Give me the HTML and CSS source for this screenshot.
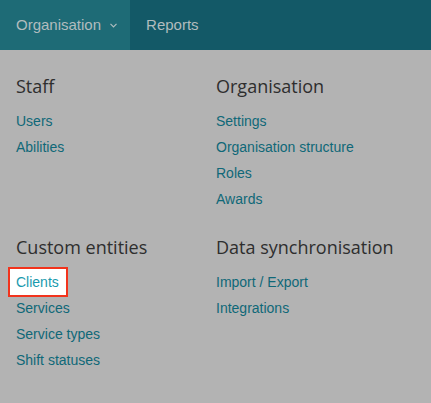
FILE: index.html
```html
<!DOCTYPE html>
<html>
<head>
<meta charset="utf-8">
<link rel="stylesheet" href="styles.css">
</head>
<body>
<nav class="nav">
  <div class="tab active">Organisation
    <svg class="chev" width="7" height="5" viewBox="0 0 7 5"><path d="M0.5 0.8 L3.5 3.8 L6.5 0.8" fill="none" stroke="#aebcbe" stroke-width="1.2"/></svg>
  </div>
  <div class="tab">Reports</div>
</nav>
<main class="menu">
  <section class="group">
    <h2 class="heading">Staff</h2>
    <a class="link">Users</a>
    <a class="link">Abilities</a>
  </section>
  <section class="group">
    <h2 class="heading">Organisation</h2>
    <a class="link">Settings</a>
    <a class="link">Organisation structure</a>
    <a class="link">Roles</a>
    <a class="link">Awards</a>
  </section>
  <section class="group">
    <h2 class="heading">Custom entities</h2>
    <a class="link highlight">Clients</a>
    <a class="link">Services</a>
    <a class="link">Service types</a>
    <a class="link">Shift statuses</a>
  </section>
  <section class="group">
    <h2 class="heading">Data synchronisation</h2>
    <a class="link">Import / Export</a>
    <a class="link">Integrations</a>
  </section>
</main>
</body>
</html>
```
FILE: styles.css
```css
html, body {
  margin: 0;
  padding: 0;
  background: #b3b3b3;
  width: 431px;
  height: 403px;
  overflow: hidden;
}
.nav {
  display: flex;
  height: 50px;
  background: #135967;
  font-family: "Liberation Sans", Arial, sans-serif;
  font-size: 15px;
  line-height: 50px;
  color: #b1bcbe;
}
.tab {
  padding: 0 16px;
  display: flex;
  align-items: center;
}
.tab.active {
  background: #1e6b76;
  padding-right: 13px;
}
.chev {
  margin-left: 9px;
  margin-top: 1px;
}
.menu {
  display: grid;
  grid-template-columns: 200px 200px;
  row-gap: 23px;
  padding: 24px 16px 0;
}
.group {
  display: flex;
  flex-direction: column;
  align-items: flex-start;
}
.heading {
  margin: 0 0 10px;
  font-family: "Open Sans", sans-serif;
  font-weight: 400;
  font-size: 18px;
  line-height: 24px;
  color: #2e2e2e;
}
.link {
  display: block;
  font-family: "Liberation Sans", Arial, sans-serif;
  font-size: 14px;
  line-height: 26px;
  color: #0f6878;
  cursor: pointer;
}
.link.highlight {
  background: #ffffff;
  color: #1a9aae;
  outline: 2px solid #f2331c;
  padding: 0 7px 0 6px;
  margin-left: -6px;
}
```
